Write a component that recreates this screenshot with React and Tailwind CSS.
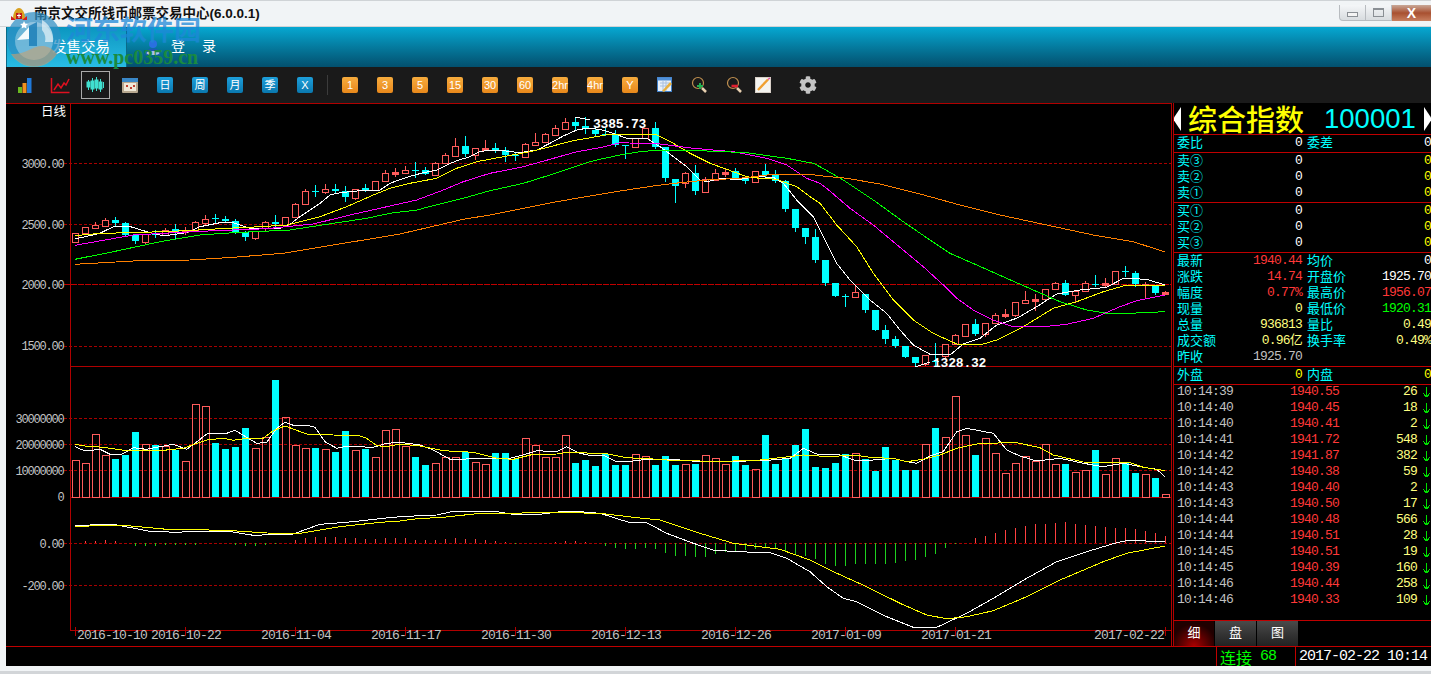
import React from "react";
import { FaCog } from "react-icons/fa";

const C = [[233,242,233,242,1],[227,233,227,233,1],[225,228,222,229,1],[220,226,218,226,1],[220,223,217,226,0],[223,235,222,237,0],[235,241,235,244,0],[234,242,234,245,1],[234,235,230,238,0],[230,235,228,236,1],[229,232,224,240,0],[231,232,227,235,1],[222,231,221,232,1],[219,223,215,225,1],[218,219,214,223,0],[219,221,216,223,0],[221,233,219,234,0],[232,237,231,241,0],[231,238,231,240,1],[222,228,221,232,1],[222,224,215,227,0],[217,225,217,227,1],[204,217,203,218,1],[191,204,189,205,1],[191,192,185,197,0],[189,192,184,194,1],[189,191,184,193,0],[191,197,186,202,0],[189,198,189,200,1],[188,190,184,192,0],[181,190,181,191,1],[173,181,170,182,1],[172,174,168,177,1],[170,173,166,173,1],[170,171,162,178,0],[170,174,167,175,0],[163,175,162,176,1],[155,163,153,164,1],[146,156,138,156,1],[146,154,136,157,0],[148,155,148,160,1],[148,150,140,150,1],[148,150,143,153,0],[150,155,147,162,0],[155,156,152,161,0],[144,157,143,158,1],[142,145,133,145,1],[134,142,133,143,1],[128,135,125,135,1],[122,129,118,129,1],[122,126,117,130,0],[126,129,117,134,0],[130,134,127,137,0],[134,135,128,136,0],[135,145,130,147,0],[145,146,145,159,0],[138,147,138,148,1],[128,138,128,139,1],[128,147,122,149,0],[147,178,147,182,0],[179,186,179,203,0],[173,183,172,188,1],[173,191,165,195,0],[179,192,177,192,1],[173,180,169,181,1],[172,174,168,177,1],[171,179,168,180,0],[178,181,178,184,0],[171,182,171,182,1],[171,175,164,178,0],[175,181,170,183,0],[181,209,180,212,0],[209,228,209,232,0],[228,237,228,244,0],[237,260,229,263,0],[260,283,260,286,0],[283,296,283,297,0],[296,297,294,307,0],[292,297,285,297,1],[294,310,294,313,0],[310,330,310,331,0],[330,339,325,344,0],[339,346,336,348,0],[346,357,346,358,0],[357,363,357,367,0],[355,364,355,366,1],[361,362,343,367,0],[344,356,344,358,1],[335,344,334,344,1],[324,336,324,336,1],[324,334,319,336,0],[323,334,323,337,1],[315,323,313,323,1],[314,316,309,318,1],[302,315,302,317,1],[300,303,291,303,1],[299,301,294,311,1],[289,299,289,299,1],[283,289,282,289,1],[283,295,280,296,0],[291,295,291,302,1],[283,291,281,291,1],[284,285,275,287,0],[283,285,278,287,1],[271,284,271,284,1],[271,272,266,277,0],[273,284,271,287,0],[284,285,282,298,1],[285,293,285,295,0],[292,294,291,294,1]];

// top of each volume bar; negative = cyan (falling), positive = red outline
const V = [460,463,434,455,-459,-455,-432,444,-445,446,-450,461,404,406,-443,-449,-447,-428,448,437,-380,417,445,448,-448,449,-452,-431,450,-449,457,430,429,446,-457,-465,463,457,457,-452,462,464,-453,-453,-459,438,445,457,457,435,-463,-460,-466,-454,-465,-465,454,456,-465,-456,-465,464,-464,455,458,464,-456,-465,469,-435,-464,-459,-445,-429,-467,-468,-463,-454,453,-459,-471,-447,-460,-470,-470,444,-428,437,396,435,-455,438,453,473,463,456,461,444,464,-464,472,470,-450,474,458,-463,-473,474,-478,494];

const H = [0,2,2,3,2,0,-3,-3,-3,-2,-2,-2,-2,0,0,0,-2,-3,-3,-2,-1,0,3,5,6,6,6,5,5,4,4,5,5,5,3,3,3,4,5,4,4,3,2,1,-1,0,0,0,1,2,2,1,0,-3,-5,-6,-6,-5,-6,-10,-13,-13,-14,-14,-11,-9,-8,-7,-6,-5,-6,-8,-11,-13,-16,-21,-23,-23,-21,-21,-21,-21,-20,-18,-17,-14,-11,-5,-1,0,5,7,10,13,15,17,19,19,20,21,19,18,17,16,15,15,14,12,10,7].concat([5]);

const z = (x0, y0, pts) => pts.map(([a, b]) => [x0 + a / 3, y0 + b / 3]);
const line = (...segs) => {
  let last = -1;
  const out = [];
  segs.flat().forEach(([x, y]) => {
    if (x > last) {
      out.push(`${x.toFixed(1)},${y.toFixed(1)}`);
      last = x;
    }
  });
  return out.join(" ");
};

const MA = [
  ["#ffffff", line(
    z(0,100,[[225,417],[300,400],[340,380],[385,378],[430,392],[480,405],[510,405],[560,398],[600,380],[660,368],[700,368],[750,385],[840,385],[870,373],[900,350],[930,330],[960,310],[990,285],[1020,278],[1080,272],[1140,270]]),
    z(390,120,[[0,190],[50,172],[100,158],[140,150],[170,135],[200,122],[240,110],[270,95],[300,90],[340,92],[390,98],[440,90],[480,70],[520,48],[560,30],[590,25],[630,28]]),
    z(600,120,[[0,20],[40,40],[80,55],[140,55],[180,80],[220,110],[260,140],[300,180],[320,185],[360,176],[420,178],[470,170],[520,172],[550,190],[590,240],[640,290]]),
    z(760,170,[[150,130],[200,220],[230,280],[270,330],[330,390],[380,430],[420,480],[460,525],[510,553],[570,555],[610,522],[660,505],[710,465],[770,445],[830,410],[890,372],[960,360],[1040,352],[1090,325],[1160,328],[1215,345]]))],
  ["#ffff00", line(
    z(0,100,[[225,407],[300,400],[400,398],[560,392],[680,385],[780,380],[860,375],[960,350],[1040,320],[1120,285]]),
    z(390,120,[[0,205],[60,190],[140,175],[200,145],[260,125],[340,110],[420,95],[480,80],[550,62],[630,48]]),
    z(600,120,[[0,47],[30,42],[120,42],[170,45],[220,70],[270,100],[330,130],[400,155],[440,170],[480,175],[530,178],[590,200],[630,230],[660,250]]),
    z(760,170,[[230,165],[290,230],[340,310],[400,390],[460,450],[520,490],[590,522],[660,525],[710,510],[790,470],[880,415],[950,395],[1030,365],[1100,345],[1215,345]]))],
  ["#ff00ff", line(
    z(0,100,[[225,436],[400,405],[600,394],[800,386],[940,372],[1050,345]]),
    z(390,120,[[0,258],[80,240],[160,210],[220,185],[300,160],[400,140],[480,118],[560,95],[630,83]]),
    z(600,120,[[0,70],[60,68],[180,72],[280,85],[400,95],[500,115],[560,135],[620,175],[660,190]]),
    z(760,170,[[200,55],[270,115],[340,165],[400,215],[490,290],[550,345],[590,385],[640,420],[700,450],[760,470],[850,470],[920,463],[1000,445],[1080,410],[1130,392],[1215,375]]))],
  ["#00ff00", line(
    z(0,100,[[225,478],[340,455],[480,425],[600,405],[700,398],[870,390],[1000,370],[1100,355]]),
    z(390,120,[[0,280],[80,270],[150,252],[220,235],[300,212],[400,190],[480,165],[540,145],[600,125],[630,118]]),
    z(600,120,[[0,112],[60,105],[120,95],[170,91],[300,92],[440,98],[560,115],[640,130],[660,140]]),
    z(760,170,[[250,30],[340,90],[430,155],[510,210],[570,250],[650,285],[740,325],[820,360],[900,395],[980,420],[1040,430],[1110,430],[1215,425]]))],
  ["#ff8000", line(
    z(0,100,[[225,493],[400,483],[570,480],[700,472],[850,460],[1000,435],[1200,402]]),
    z(390,120,[[220,298],[300,285],[400,265],[500,245],[600,228]]),
    z(600,120,[[0,223],[80,210],[160,198],[240,188],[320,180],[420,175],[520,163],[630,163],[660,167]]),
    z(760,170,[[260,25],[360,42],[480,72],[600,105],[720,135],[860,165],[1000,195],[1120,215],[1215,246]]))],
  ["#ffffff", line(
    z(0,360,[[225,260],[255,273],[300,268],[330,283],[365,283],[400,263],[440,268],[480,260],[520,253],[560,268],[600,238],[620,222],[680,220],[705,211],[740,232],[770,250],[800,247],[830,205],[855,187],[880,196],[920,196],[945,202],[975,245],[1010,265],[1040,259],[1120,262],[1160,250]]),
    z(400,380,[[0,187],[60,195],[100,210],[150,238],[180,240],[210,235],[330,235],[370,225],[410,212],[470,215],[500,200],[540,220],[580,228],[610,225],[650,245],[700,243],[740,238],[840,240],[900,245],[1040,243]]),
    z(760,380,[[0,243],[90,235],[130,205],[170,222],[240,225],[290,243],[340,240],[400,235],[440,245],[470,250],[510,228],[550,215],[590,155],[620,145],[700,160],[740,210],[780,228],[830,243],[900,235],[970,250],[1030,260],[1090,250],[1150,262],[1190,268],[1215,290]]))],
  ["#ffff00", line(
    z(0,360,[[225,253],[255,258],[310,262],[380,272],[430,270],[470,273],[550,265],[590,250],[620,240],[670,235],[700,241],[740,235],[790,235],[820,212],[855,198],[920,222],[1080,228],[1100,235],[1130,257],[1160,260]]),
    z(400,380,[[0,192],[60,198],[130,212],[220,217],[290,235],[340,238],[400,223],[470,222],[500,217],[620,221],[680,233],[760,237],[800,240],[900,243],[1000,243]]),
    z(760,380,[[0,240],[130,225],[210,230],[280,225],[340,233],[400,235],[440,245],[490,238],[540,225],[590,205],[660,190],[770,188],[840,203],[880,225],[970,246],[1110,248],[1150,262],[1215,272]]))],
  ["#ffffff", line(
    z(0,360,[[225,498],[300,493],[350,495],[450,514],[530,517],[600,513],[680,513],[760,526],[880,522],[960,493],[1040,487],[1150,475]]),
    z(400,380,[[0,410],[60,407],[110,405],[160,394],[290,395],[340,403],[420,403],[480,395],[540,395],[600,400],[690,428],[740,428],[800,460],[880,490],[940,510],[1010,515]]),
    z(760,380,[[30,518],[80,535],[150,575],[200,620],[250,655],[290,665],[380,710],[460,742],[530,742],[620,700],[700,655],[800,595],[890,545],[980,515],[1070,488],[1100,482],[1215,484]]))],
  ["#ffff00", line(
    z(0,360,[[225,499],[370,496],[500,508],[680,511],[800,519],[900,520],[1020,500],[1140,487]]),
    z(400,380,[[0,423],[60,415],[120,413],[240,400],[500,398],[600,400],[700,412],[780,420],[900,460],[1000,490]]),
    z(760,380,[[60,508],[150,540],[220,575],[320,620],[420,670],[500,705],[560,716],[620,710],[700,692],[800,650],[900,600],[1030,545],[1100,520],[1215,498]]))],
];

const RED = "#ff5c5c";
const FRAME = "#b00000";
const GRID = [163.5, 224.5, 346.5, 418.5, 444.5, 470.5, 543.5, 585.5];
const SOLID = [366.5, 497.5, 630.5];
const AXIS = [["3000.00",164],["2500.00",225],["2000.00",285],["1500.00",346],["30000000",419],["20000000",445],["10000000",471],["0",497],["0.00",544],["-200.00",586]];
const DATES = [["2016-10-10",77,75],["2016-10-22",151,185],["2016-11-04",261,295],["2016-11-17",371,405],["2016-11-30",481,515],["2016-12-13",591,625],["2016-12-26",701,735],["2017-01-09",811,845],["2017-01-21",921,955],["2017-02-22",1094,1165]];

function Chart() {
  return (
    <svg width="1166" height="543" viewBox="6 103 1166 543" className="block shrink-0 bg-black" shapeRendering="crispEdges">
      <path d="M6 103.5H1172M70.5 103V630M1171.5 103V646" stroke={FRAME} fill="none" />
      {GRID.map((y) => (
        <line key={y} x1="64" x2="1171" y1={y} y2={y} stroke="#a80000" strokeDasharray="3 2" />
      ))}
      <line x1="64" x2="1171" y1="284.5" y2="284.5" stroke="#c00000" strokeDasharray="6 1" />
      {SOLID.map((y) => (
        <line key={y} x1="70" x2="1171" y1={y} y2={y} stroke={FRAME} />
      ))}
      {DATES.map(([, , t]) => (
        <line key={t} x1={t + 0.5} x2={t + 0.5} y1="627" y2="636" stroke={FRAME} />
      ))}
      {V.map((v, i) => {
        const base = 72 + i * 10;
        return v < 0 ? (
          <rect key={i} x={base} y={-v} width="7" height={497 + v} fill="#00ffff" />
        ) : (
          <rect key={i} x={base + 0.5} y={v + 0.5} width="7" height={497 - v} fill="none" stroke={RED} />
        );
      })}
      {H.map((h, i) =>
        h === 0 ? null : (
          <line key={i} x1={75.5 + i * 10} x2={75.5 + i * 10} y1="543" y2={543 - h} stroke={h > 0 ? "#ff4040" : "#1fd01f"} />
        ),
      )}
      {C.map(([t, b, hi, lo, up], i) => {
        const base = 72 + i * 10;
        const col = up ? RED : "#00ffff";
        return (
          <g key={i}>
            <line x1={base + 3.5} x2={base + 3.5} y1={hi} y2={lo} stroke={col} />
            {up ? (
              <rect x={base + 0.5} y={t + 0.5} width="6" height={b - t} fill={b - t < 3 ? col : "#000"} stroke={col} />
            ) : (
              <rect x={base} y={t} width="7" height={Math.max(b - t, 1)} fill={col} />
            )}
          </g>
        );
      })}
      {MA.map(([c, p], i) => (
        <polyline key={i} points={p} fill="none" stroke={c} strokeWidth="1" />
      ))}
      <polyline points="575,117 590,120" fill="none" stroke="#fff" />
      <polyline points="915,367 930,362" fill="none" stroke="#fff" />
      <g fontFamily="'Liberation Mono',monospace" shapeRendering="auto">
        <text x="593" y="128" fontSize="13" letterSpacing="-0.2" fontWeight="700" fill="#fff">3385.73</text>
        <text x="933" y="367" fontSize="13" letterSpacing="-0.2" fontWeight="700" fill="#fff">1328.32</text>
        {AXIS.map(([t, y]) => (
          <text key={t} x="63.5" y={y + 4} textAnchor="end" fontSize="12" letterSpacing="-1.2" fill="#c4c4c4">{t}</text>
        ))}
        {DATES.map(([t, x]) => (
          <text key={t} x={x} y="639" fontSize="13" letterSpacing="-0.8" fill="#c4c4c4">{t}</text>
        ))}
        <text x="41" y="115.5" fontSize="12.5" fontFamily="'Noto Sans CJK SC',sans-serif" fill="#fff">日线</text>
      </g>
    </svg>
  );
}

function Row({ l, v, c = "text-white", l2, v2, c2 = "text-[#ffff00]" }) {
  return (
    <div className="flex h-4 items-center whitespace-nowrap pb-[3px]">
      <div className="flex w-[128px] shrink-0 items-center justify-between pl-[3px]">
        <span className="text-[13px] text-[#00ffff] font-['Noto_Sans_CJK_SC',sans-serif]">{l}</span>
        <span className={`pt-[3px] text-[13px] tracking-[-0.8px] ${c}`}>{v}</span>
      </div>
      <span className="ml-[5px] text-[13px] text-[#00ffff] font-['Noto_Sans_CJK_SC',sans-serif]">{l2}</span>
      <span className={`ml-auto pt-[3px] text-[13px] tracking-[-0.8px] ${c2}`}>{v2}</span>
    </div>
  );
}

const TICKS = [["10:14:39","1940.55","26"],["10:14:40","1940.45","18"],["10:14:40","1940.41","2"],["10:14:41","1941.72","548"],["10:14:42","1941.87","382"],["10:14:42","1940.38","59"],["10:14:43","1940.40","2"],["10:14:43","1940.50","17"],["10:14:44","1940.48","566"],["10:14:44","1940.51","28"],["10:14:45","1940.51","19"],["10:14:45","1940.39","160"],["10:14:46","1940.44","258"],["10:14:46","1940.33","109"]];

const Y = "text-[#ffff80]";
const R = "text-[#ff3838]";

function Panel() {
  return (
    <div className="ml-px flex h-[543px] min-w-0 flex-1 flex-col overflow-hidden border-l border-[#b00000] bg-black font-['Liberation_Mono','Noto_Sans_CJK_SC',monospace]">
      <div className="flex h-[31px] shrink-0 items-center">
        <svg width="8" height="24" viewBox="0 0 8 24" className="ml-[-1px] shrink-0"><path d="M8 0V24L0 12Z" fill="#fff" /></svg>
        <span className="ml-[7px] whitespace-nowrap text-[29px] font-medium leading-none text-[#ffff00] font-['Noto_Sans_CJK_SC',sans-serif]">综合指数</span>
        <span className="ml-[20px] text-[27.5px] leading-none text-[#00ffff] font-['Liberation_Sans',sans-serif]">100001</span>
        <svg width="8" height="24" viewBox="0 0 8 24" className="ml-[8px] shrink-0"><path d="M0 0V24L8 12Z" fill="#fff" /></svg>
      </div>
      <div className="h-[18px] shrink-0 border-t border-[#c00000]">
        <Row l="委比" v="0" l2="委差" v2="0" c2="text-white" />
      </div>
      <div className="h-[50px] shrink-0 border-t border-[#c00000]">
        <Row l="卖③" v="0" v2="0" />
        <Row l="卖②" v="0" v2="0" />
        <Row l="卖①" v="0" v2="0" />
      </div>
      <div className="h-[50px] shrink-0 border-t border-[#c00000]">
        <Row l="买①" v="0" v2="0" />
        <Row l="买②" v="0" v2="0" />
        <Row l="买③" v="0" v2="0" />
      </div>
      <div className="h-[114px] shrink-0 border-t border-[#c00000]">
        <Row l="最新" v="1940.44" c={R} l2="均价" v2="0" c2="text-white" />
        <Row l="涨跌" v="14.74" c={R} l2="开盘价" v2="1925.70" c2="text-white" />
        <Row l="幅度" v="0.77%" c={R} l2="最高价" v2="1956.07" c2={R} />
        <Row l="现量" v="0" c={Y} l2="最低价" v2="1920.31" c2="text-[#00ff00]" />
        <Row l="总量" v="936813" c={Y} l2="量比" v2="0.49" c2={Y} />
        <Row l="成交额" v="0.96亿" c={Y} l2="换手率" v2="0.49%" c2={Y} />
        <Row l="昨收" v="1925.70" c="text-[#c0c0c0]" />
      </div>
      <div className="h-[18px] shrink-0 border-t border-[#c00000]">
        <Row l="外盘" v="0" c="text-[#ffff00]" l2="内盘" v2="0" />
      </div>
      <div className="min-h-0 flex-1 border-t border-[#c00000]">
        <div className="-mt-px">
          {TICKS.map(([t, p, q], i) => (
            <div key={i} className="flex h-4 items-center whitespace-nowrap pl-[3px] text-[13px] tracking-[-0.8px]">
              <span className="w-[113px] shrink-0 text-[#c0c0c0]">{t}</span>
              <span className={`w-[60px] shrink-0 ${R}`}>{p}</span>
              <span className={`w-[67px] shrink-0 text-right ${Y}`}>{q}</span>
              <svg width="7" height="11" viewBox="0 0 7 11" className="ml-[6px] shrink-0" shapeRendering="crispEdges">
                <path d="M3.5 0V10M.5 6.5L3.5 10.5M6.5 6.5L3.5 10.5" stroke="#00e000" fill="none" />
              </svg>
            </div>
          ))}
        </div>
      </div>
      <div className="flex h-[26px] shrink-0 gap-px border-t border-[#c00000] font-['Noto_Sans_CJK_SC',sans-serif] text-[13px] text-white">
        <div className="flex w-[40px] items-center justify-center bg-[radial-gradient(circle_at_50%_100%,#a80000,#200000_70%)] pb-[4px]">细</div>
        <div className="flex w-[41px] items-center justify-center bg-gradient-to-b from-[#4a4a4a] to-[#222] pb-[4px]">盘</div>
        <div className="flex w-[41px] items-center justify-center bg-gradient-to-b from-[#4a4a4a] to-[#222] pb-[4px]">图</div>
      </div>
    </div>
  );
}

const BTN = "flex h-4 w-4 items-center justify-center rounded-[2px] text-[11px] leading-none text-white font-['Liberation_Sans','Noto_Sans_CJK_SC',sans-serif]";
const Slot = ({ children, className = "w-[35px]" }) => <div className={`flex shrink-0 items-center justify-center ${className}`}>{children}</div>;
const Blue = ({ t }) => <Slot><div className={`${BTN} bg-gradient-to-b from-[#1d9fdb] to-[#0a78ae]`}>{t}</div></Slot>;
const Orange = ({ t }) => <Slot><div className={`${BTN} bg-gradient-to-b from-[#f7ac3d] to-[#e8881a]`}>{t}</div></Slot>;

function Loupe({ sign }) {
  return (
    <svg width="18" height="18" viewBox="0 0 18 18">
      <circle cx="7" cy="7" r="5.5" fill="none" stroke="#c09050" strokeWidth="1.2" />
      <path d="M11 12L15 16" stroke="#e8d0b0" strokeWidth="2.5" />
      {sign === "+" ? (
        <path d="M9 7V13M6 10H12" stroke="#22b050" strokeWidth="2" />
      ) : (
        <path d="M5.5 10H12" stroke="#e02030" strokeWidth="2.6" />
      )}
    </svg>
  );
}

function Toolbar() {
  return (
    <div className="ml-[6px] flex h-9 shrink-0 items-center bg-[#1a1a1a] pl-[1.5px]">
      <Slot>
        <svg width="16" height="17" viewBox="0 0 16 17">
          <rect x="1" y="10" width="4" height="6" fill="#6ab820" />
          <rect x="5.5" y="6" width="4" height="10" fill="#f09020" />
          <rect x="10" y="1" width="4.5" height="15" fill="#1f78d8" />
        </svg>
      </Slot>
      <Slot>
        <svg width="20" height="17" viewBox="0 0 20 17" fill="none" stroke="#e01020" strokeWidth="1.5">
          <path d="M1.5 1V15.5H19.5" />
          <path d="M4 13L8 7L11 11L14 6L16 8L19 2" />
        </svg>
      </Slot>
      <Slot>
        <div className="flex h-7 w-[29px] items-center justify-center border border-[#aaa]">
          <svg width="19" height="16" viewBox="0 0 19 16">
            <g stroke="#40e0d0" strokeWidth="1" fill="#40e0d0">
              <path d="M2.5 3V13M6.5 1V15M10.5 0V14M14.5 2V15M17.5 5V11" fill="none" />
              <rect x="1" y="5" width="3" height="5" />
              <rect x="5" y="4" width="3" height="8" />
              <rect x="9" y="3" width="3" height="8" />
              <rect x="13" y="5" width="3" height="7" />
            </g>
          </svg>
        </div>
      </Slot>
      <Slot>
        <svg width="16" height="15" viewBox="0 0 16 15">
          <rect x="0" y="0" width="16" height="15" rx="1" fill="#b8a890" />
          <rect x="0" y="0" width="16" height="4" fill="#3a88c8" />
          <rect x="2" y="5" width="12" height="8" fill="#f0e8d8" />
          <path d="M4 7h2v2H4zM8 9h2v2H8zM11 7h2v2h-2z" fill="#c04030" />
        </svg>
      </Slot>
      {["日", "周", "月", "季", "X"].map((t) => <Blue key={t} t={t} />)}
      <div className="flex w-[10px] shrink-0 justify-center"><div className="h-5 w-px bg-[#3c3c3c]" /></div>
      {["1", "3", "5", "15", "30", "60", "2hr", "4hr", "Y"].map((t) => <Orange key={t} t={t} />)}
      <Slot>
        <svg width="16" height="16" viewBox="0 0 16 16">
          <rect x="0.5" y="0.5" width="14" height="14" fill="#e8f0fa" stroke="#4080c8" />
          <rect x="0.5" y="0.5" width="14" height="3" fill="#5090d8" />
          <path d="M3 6H12M3 9H12M6 4V14M9 4V14" stroke="#a8c0e0" />
          <path d="M5 14L13 5L15 7L7 15Z" fill="#e8b040" />
        </svg>
      </Slot>
      <Slot><Loupe sign="+" /></Slot>
      <Slot><Loupe sign="-" /></Slot>
      <Slot className="w-[21px]">
        <svg width="16" height="16" viewBox="0 0 16 16">
          <rect x="0.5" y="0.5" width="15" height="15" fill="#f4f4f0" stroke="#d8d0c8" />
          <path d="M3 13L13 2.5" stroke="#f0a030" strokeWidth="2.4" />
          <path d="M13 2.5L15 1" stroke="#e050a0" strokeWidth="1.5" />
        </svg>
      </Slot>
      <Slot className="ml-[17px] w-[35px]"><FaCog className="text-[18px] text-[#c4c4c4]" /></Slot>
    </div>
  );
}

function Watermark() {
  return (
    <div className="pointer-events-none absolute left-[7px] top-[12px] flex">
      <svg width="55" height="55" viewBox="0 0 55 55">
        <circle cx="27" cy="27" r="27" fill="#2f8fc4" fillOpacity="0.72" />
        <circle cx="27" cy="29" r="19" fill="#d8ecf4" fillOpacity="0.4" />
        <path d="M4 42A27 27 0 0 0 50 42C40 30 30 34 22 38C14 42 9 42 4 42Z" fill="#c8a070" fillOpacity="0.6" />
        <path d="M22 14L22 34L30 34L30 10Z" fill="#1f80b8" fillOpacity="0.85" />
        <path d="M10 28L22 15L22 27Z" fill="#f4fafc" />
        <path d="M17 9l1.2 2.6 2.8.3-2 1.9.6 2.8-2.6-1.4-2.4 1.4.5-2.8-2-1.9 2.8-.3z" fill="#fff" />
        <path d="M35 8A22 22 0 0 1 46 30L38 30A14 14 0 0 0 35 18Z" fill="#e8f4f8" fillOpacity="0.7" />
      </svg>
      <div className="ml-[4px] flex flex-col">
        <span className="mt-[1px] whitespace-nowrap text-[27px] font-bold leading-[32px] text-[#1f88d8]/75 font-['Noto_Sans_CJK_SC',sans-serif]">河东软件园</span>
        <span className="mt-[1px] whitespace-nowrap text-[20px] font-bold leading-[22px] text-[#1a8a40] font-['Liberation_Serif',serif]">www.pc0359.cn</span>
      </div>
    </div>
  );
}

export default function App() {
  return (
    <div className="relative flex h-[674px] w-[1431px] flex-col overflow-hidden bg-[#f1f4f6] font-['Liberation_Sans','Noto_Sans_CJK_SC',sans-serif]">
      <div className="flex h-[27px] shrink-0 items-center border-t border-b border-[#cfd3d6] pl-[11px]">
        <svg width="16" height="14" viewBox="0 0 16 14" className="relative z-10 shrink-0">
          <path d="M2 12C2 5 5 1 8 1C11 1 14 5 14 12Z" fill="#d8a020" />
          <path d="M0 9L5 13H0ZM16 9L11 13H16Z" fill="#d02020" />
          <rect x="5" y="6" width="6" height="6" fill="#c01818" />
          <path d="M8 6.5V11M6 8.5H10" stroke="#fff" />
        </svg>
        <span className="ml-[7px] whitespace-nowrap text-[13.5px] font-bold leading-none text-[#111]">南京文交所钱币邮票交易中心(6.0.0.1)</span>
        <div className="ml-auto mt-[4px] flex h-[16px] self-start text-[#888]">
          <div className="flex w-[27px] items-center justify-center rounded-bl-[4px] border border-t-0 border-[#b8bcc0] bg-gradient-to-b from-[#f4f6f8] to-[#d8dcdf]">
            <div className="mt-[3px] h-[5px] w-[11px] border border-[#8a8f94] bg-[#f4f4f4]" />
          </div>
          <div className="flex w-[26px] items-center justify-center border-b border-r border-[#b8bcc0] bg-gradient-to-b from-[#f4f6f8] to-[#d8dcdf]">
            <div className="h-[9px] w-[11px] border border-[#8a8f94] border-t-2" />
          </div>
          <div className="flex w-[39px] items-center justify-center bg-gradient-to-b from-[#c8a898] via-[#a85030] to-[#c88060] text-[14px] font-bold leading-none text-white">X</div>
        </div>
      </div>

      <div className="ml-[6px] flex h-[40px] shrink-0 items-center bg-gradient-to-b from-[#06a8d2] to-[#03506e] text-[14px] text-white font-['Noto_Sans_CJK_SC',sans-serif]">
        <div className="flex h-full w-[121px] shrink-0 items-center border-x border-[#0a6a88] bg-gradient-to-b from-[#0a96c0] to-[#28bce4] pb-[3px] pl-[45px] text-[14.5px]">发售交易</div>
        <svg width="14" height="17" viewBox="0 0 14 17" className="ml-[19px] shrink-0">
          <circle cx="7" cy="5" r="4" fill="#2a70e0" />
          <path d="M0 16C0 11 3 9.5 7 9.5S14 11 14 16Z" fill="#1f58b8" />
          <ellipse cx="7" cy="14" rx="6.5" ry="2" fill="#e8f0f8" fillOpacity=".7" />
        </svg>
        <span className="ml-[11px] pb-[3px]">登</span>
        <span className="ml-[17px] pb-[3px]">录</span>
      </div>

      <Toolbar />

      <div className="ml-[6px] flex h-[543px] shrink-0 bg-black">
        <Chart />
        <Panel />
      </div>

      <div className="ml-[6px] flex h-[20px] shrink-0 justify-end border-t border-[#c00000] bg-black">
        <div className="flex w-[79px] items-center border-l border-[#c00000] pl-[3px] text-[16px] leading-none text-[#00ff00]">
          <span className="font-['Noto_Sans_CJK_SC',sans-serif]">连接</span>
          <span className="ml-[8px] font-['Liberation_Mono',monospace] text-[15px] tracking-[-1px]">68</span>
        </div>
        <div className="flex w-[136px] items-center whitespace-nowrap border-l border-[#c00000] pl-[3px] font-['Liberation_Mono',monospace] text-[15px] leading-none tracking-[-1px] text-white">2017-02-22 10:14</div>
      </div>
      <div className="min-h-0 flex-1 border-b-[3px] border-[#d2d5d8]" />

      <Watermark />
    </div>
  );
}
